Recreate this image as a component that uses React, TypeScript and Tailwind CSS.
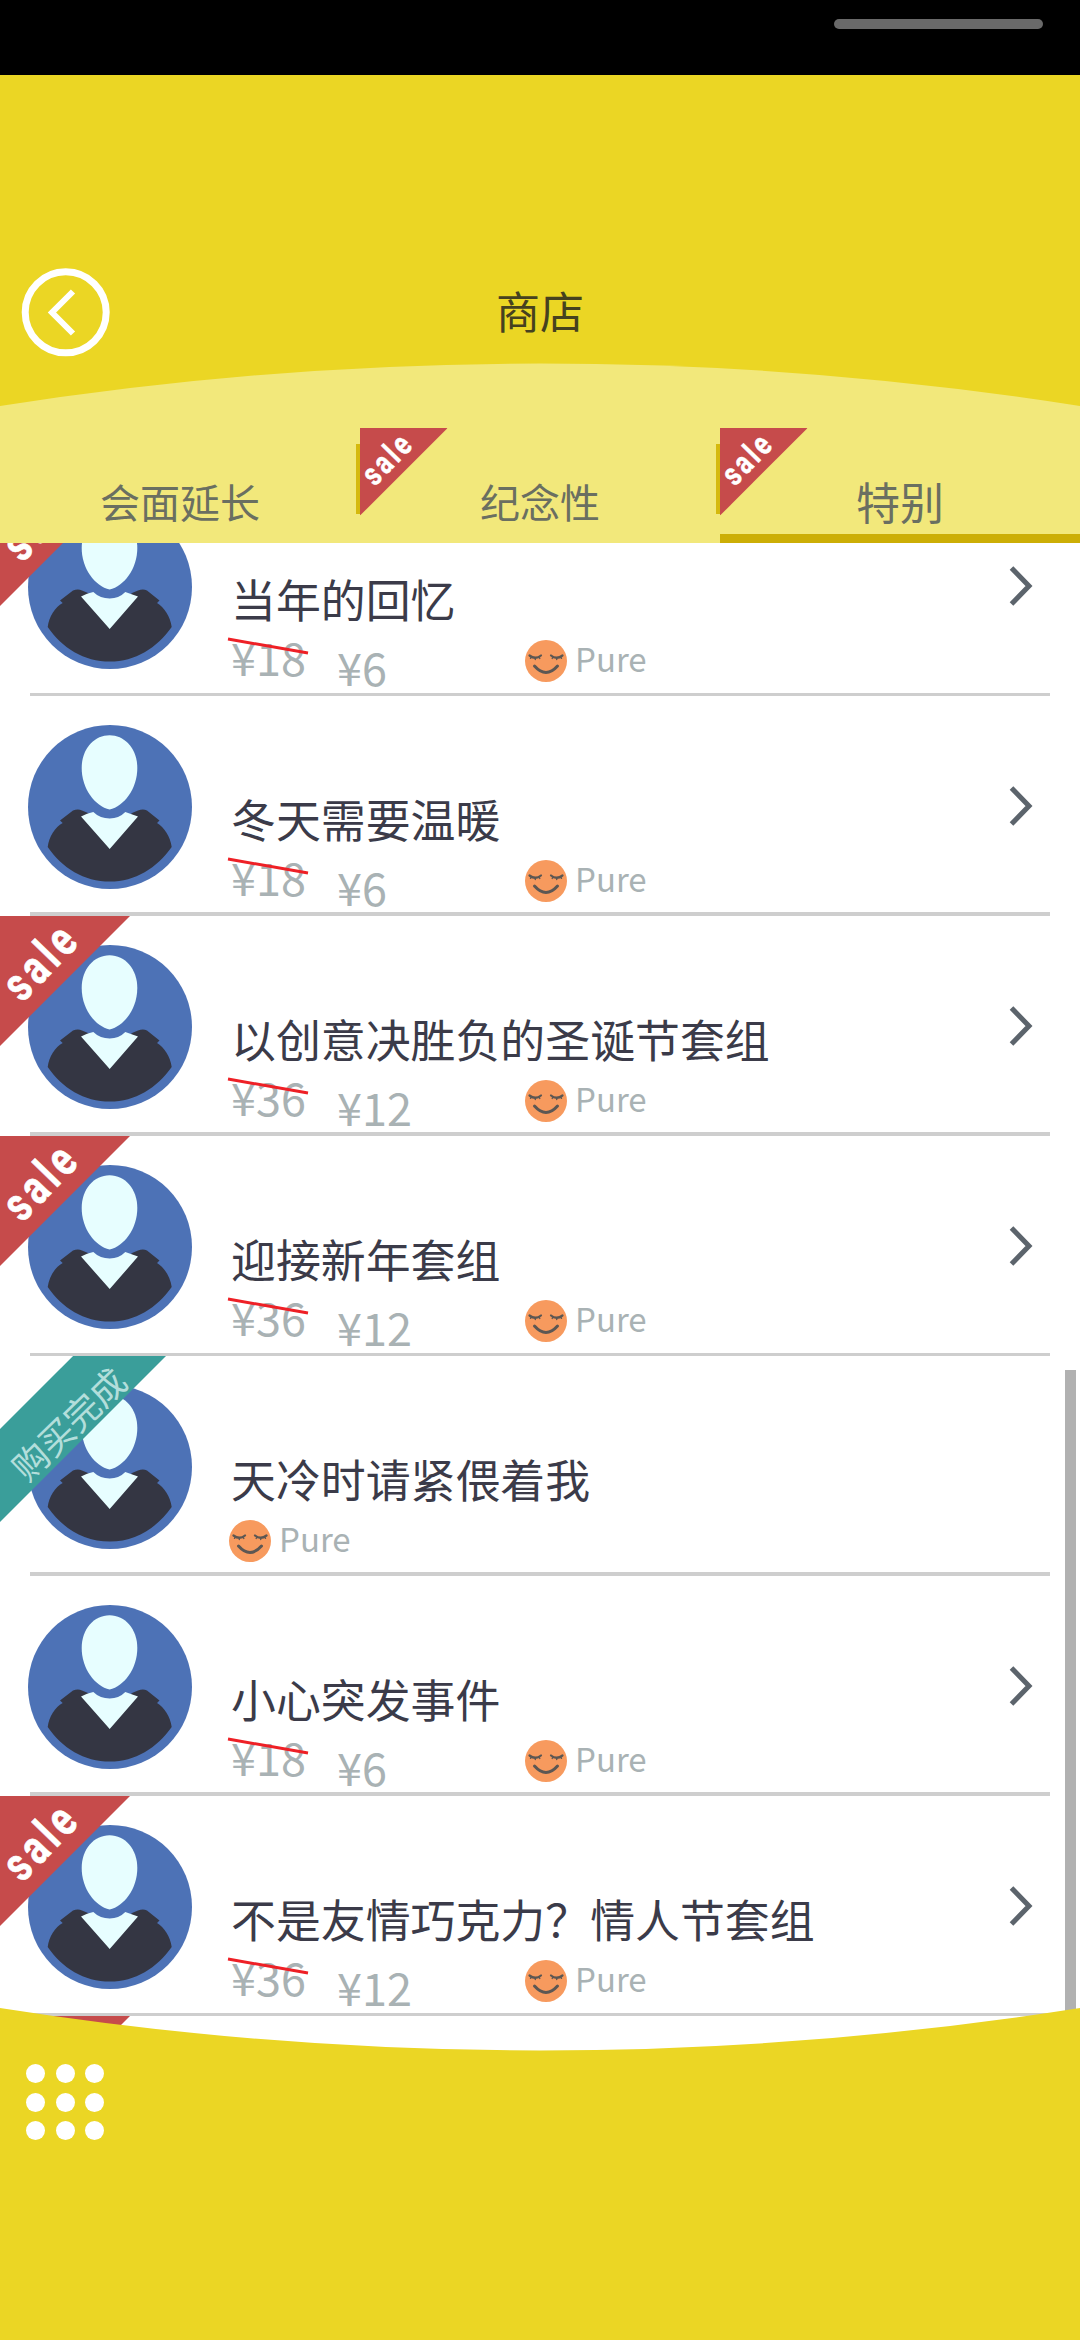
type Item = {
  title: string;
  oldPrice?: string;
  price?: string;
  tag?: 'sale' | 'bought';
  thin?: boolean;
};

const items: Item[] = [
  { title: '当年的回忆', oldPrice: '¥18', price: '¥6', tag: 'sale', thin: true },
  { title: '冬天需要温暖', oldPrice: '¥18', price: '¥6' },
  { title: '以创意决胜负的圣诞节套组', oldPrice: '¥36', price: '¥12', tag: 'sale' },
  { title: '迎接新年套组', oldPrice: '¥36', price: '¥12', tag: 'sale', thin: true },
  { title: '天冷时请紧偎着我', tag: 'bought' },
  { title: '小心突发事件', oldPrice: '¥18', price: '¥6' },
  { title: '不是友情巧克力？情人节套组', oldPrice: '¥36', price: '¥12', tag: 'sale', thin: true },
];

function Avatar() {
  return (
    <svg viewBox="0 0 164 164" className="ml-7 mt-[29px] size-[164px] shrink-0">
      <circle cx="82" cy="82" r="82" fill="#4d72b6" />
      <path
        d="M19.7 122C21 112 27 102 34.7 98L32 95.5L45 85.5Q50 83.5 54 85.5L60 88L81.7 110L104 88L110 85.5Q115 83.5 119 85.5L131.5 95.5L129 98C136 102 142.5 112 143.7 122C129 143 107 156.6 82 156.600C56 156.6 34 143 19.7 122Z"
        fill="#343643"
      />
      <path d="M53 91.6Q59 88 65.3 87Q72 93.5 81.7 93.5Q91 93.5 97.3 87L110 91.6L81.7 124Z" fill="#e7feff" />
      <path d="M81.6 10.3C97 10.3 109.3 24 109.3 43C109.3 64 96 81 81.6 84.6C67 81 53.7 64 53.7 43C53.7 24 66 10.3 81.6 10.3Z" fill="#e7feff" />
    </svg>
  );
}

function Face() {
  return (
    <svg viewBox="0 0 42 42" className="size-[42px] shrink-0">
      <circle cx="21" cy="21" r="21" fill="#f79a5e" />
      <g fill="none" stroke="#5c5753" strokeLinecap="round">
        <path d="M4.5 15.5Q10.5 20 16 15.5M26 15.5Q31.5 20 37.5 15.5" strokeWidth="2.2" />
        <path d="M6.5 17L5.5 18.2M10.3 18V19.5M14 17.2L14.8 18.4M28 17.2L27.2 18.4M31.7 18V19.5M35.5 17L36.5 18.2" strokeWidth="1.4" />
        <path d="M9.5 26Q21 39 32.5 26" strokeWidth="3" />
      </g>
    </svg>
  );
}

function SaleTag({ label = true }: { label?: boolean }) {
  return (
    <div className="absolute left-0 top-0 size-[130px]">
      <div className="absolute inset-0 bg-[#c64b4b] [clip-path:polygon(0_0,100%_0,0_100%)]" />
      {label && (
        <span className="absolute left-[41px] top-[45px] -translate-x-1/2 -translate-y-1/2 -rotate-[46deg]">
          <span className="block scale-x-[0.77] font-[Roboto] text-[48px] leading-none font-bold tracking-[6px] text-white [-webkit-text-stroke:0.7px_white]">sale</span>
        </span>
      )}
    </div>
  );
}

function BoughtTag() {
  return (
    <div className="absolute left-0 top-0 size-[166px]">
      <div className="absolute inset-0 bg-[#3a9e9a] [clip-path:polygon(44%_0,100%_0,0_100%,0_44%)]" />
      <span className="absolute left-[68px] top-[67px] -translate-x-1/2 -translate-y-1/2 -rotate-[44deg] text-[35.5px] leading-none whitespace-nowrap text-[#b3dedb]">
        购买完成
      </span>
    </div>
  );
}

function Row({ item }: { item: Item }) {
  return (
    <li className="relative flex h-[220px] shrink-0 flex-col">
      <div className="flex min-h-0 flex-1">
        <Avatar />
        <div className="ml-[39px] flex w-[760px] flex-col pt-[93px]">
          <h2 className="h-[62px] text-[44.9px] leading-[60px] whitespace-nowrap text-[#3b3b49]">{item.title}</h2>
          <div className="flex h-[50px] text-[45px] leading-[50px] text-[#a9b2b4]">
            {item.price && (
              <>
                <div className="relative h-[50px] w-[106px] pt-px">
                  {item.oldPrice}
                  <svg viewBox="0 0 84 20" className="absolute -left-1 top-[5px] h-5 w-[84px]">
                    <path d="M1 3L81 17" stroke="#ee2026" strokeWidth="3" />
                  </svg>
                </div>
                <div className="h-[50px] w-[188px] pt-[11px]">{item.price}</div>
              </>
            )}
            <div className={item.price ? 'mt-[9px] flex h-[42px]' : 'ml-[-2px] mt-[9px] flex h-[42px]'}>
              <Face />
              <span className="ml-[8px] text-[33px] leading-[36px]">Pure</span>
            </div>
          </div>
        </div>
        {item.price && (
          <svg viewBox="0 0 24 40" className="ml-[18px] mt-[90px] h-10 w-6 shrink-0">
            <path d="M2.5 2L20 20L2.5 38" fill="none" stroke="#5c646c" strokeWidth="5" />
          </svg>
        )}
      </div>
      <div className={item.thin ? 'mr-[30px] ml-[30px] h-[3px] bg-[#cecece]' : 'mr-[30px] ml-[30px] h-[4px] bg-[#cecece]'} />
      {item.tag === 'sale' && <SaleTag />}
      {item.tag === 'bought' && <BoughtTag />}
    </li>
  );
}

function TabSale() {
  return (
    <div className="absolute -left-1 top-[22px] h-[88px] w-[92px]">
      <div className="absolute left-0 top-4 h-[70px] w-1 bg-[#d5b90d]" />
      <div className="absolute left-1 top-0 origin-top-left scale-[0.674]">
        <div className="relative size-[130px]">
          <SaleTag />
        </div>
      </div>
    </div>
  );
}

export default function App() {
  return (
    <div className="flex h-[2340px] w-[1080px] flex-col overflow-hidden bg-white font-['Noto_Sans_CJK_SC',sans-serif]">
      <div className="flex h-[75px] shrink-0 justify-end bg-black pt-[19px] pr-[37px]">
        <div className="h-[10px] w-[209px] rounded-full bg-[#696969]" />
      </div>

      <header className="grid h-[288px] shrink-0 grid-cols-3 bg-[#ebd624] pt-[193px]">
        <svg viewBox="0 0 90 90" className="ml-[21px] size-[90px]" fill="none" stroke="#fff">
          <circle cx="44.7" cy="44.3" r="40.5" strokeWidth="7" />
          <path d="M52 23.5L31 44.5L52 65.5" strokeWidth="6" />
        </svg>
        <h1 className="mt-[12px] text-center text-[44px] leading-[60px] text-[#46411f]">商店</h1>
      </header>

      <div className="h-[43px] shrink-0 bg-[#ebd624]">
        <svg viewBox="0 0 1080 43" className="block h-[43px] w-[1080px]">
          <path d="M0 43Q540 -42 1080 43Z" fill="#f2e87b" />
        </svg>
      </div>

      <nav className="grid h-[137px] shrink-0 grid-cols-3 bg-[#f2e87b] text-center text-[40px] leading-[60px] text-[#6a6f61]">
        <div className="pt-[65px]">会面延长</div>
        <div className="relative pt-[65px]">
          <TabSale />
          纪念性
        </div>
        <div className="relative border-b-[9px] border-[#ccae06] pt-[65px] text-[44px]">
          <TabSale />
          特别
        </div>
      </nav>

      <main className="relative h-[1510px] shrink-0 overflow-hidden">
        <ul className="-mt-[67px] flex flex-col">
          {items.map((item) => (
            <Row key={item.title} item={item} />
          ))}
          <li className="relative h-[220px] shrink-0">
            <SaleTag label={false} />
          </li>
        </ul>
        <div className="absolute top-[827px] right-1 h-[660px] w-[11px] bg-[#b1b1b1]" />
      </main>

      <footer className="relative -mt-[45px] flex grow flex-col">
        <svg viewBox="0 0 1080 44" className="block h-[44px] w-[1080px] shrink-0">
          <path d="M0 0Q540 85 1080 0V44H0Z" fill="#ebd624" />
        </svg>
        <div className="-mt-px grow bg-[#ebd624] pt-[13px] pl-[26px]">
          <div className="grid w-[78px] grid-cols-3 gap-x-[10.5px] gap-y-[9.5px]">
            {Array.from({ length: 9 }, (_, i) => (
              <span key={i} className="size-[19px] rounded-full bg-white" />
            ))}
          </div>
        </div>
      </footer>
    </div>
  );
}
